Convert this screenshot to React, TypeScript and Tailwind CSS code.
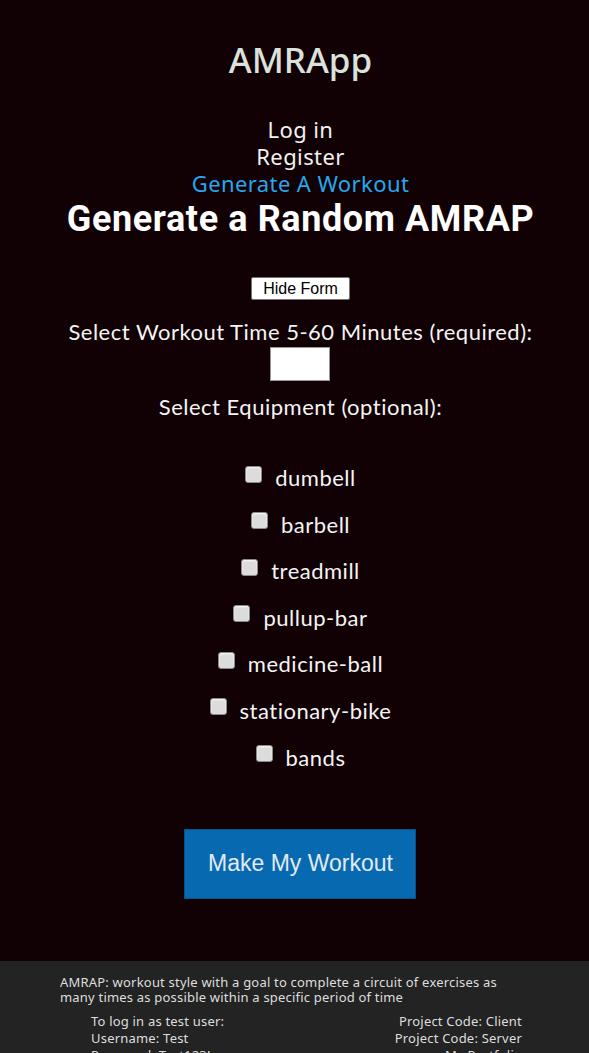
import { useState } from "react";

const EQUIPMENT = [
  "dumbell",
  "barbell",
  "treadmill",
  "pullup-bar",
  "medicine-ball",
  "stationary-bike",
  "bands",
];

const ubuntu = "font-['Noto_Sans','Open_Sans',sans-serif]";
const nunito = "font-['Lato','Noto_Sans',sans-serif]";
const arial = "font-['Liberation_Sans',Arial,sans-serif]";

// Random AMRAP generator: nav, form with equipment checkboxes, info footer.
export default function App() {
  const [checked, setChecked] = useState<Record<string, boolean>>({});

  function toggle(name: string) {
    setChecked((prev) => ({ ...prev, [name]: !prev[name] }));
  }

  return (
    <div className="min-h-[1053px] bg-[#110104] flex flex-col">
      <main className="flex-1 flex flex-col items-center pl-[12px] pb-[62px]">
        <h1 className={`${ubuntu} mt-[38px] text-[35px] leading-[44px] font-medium text-[#dbe2dc]`}>
          AMRApp
        </h1>

        {/* Nav links */}
        <nav
          className={`${ubuntu} mt-[34px] flex flex-col items-center text-[22px] leading-[27px] tracking-[0.4px]`}
        >
          <a className="text-[#f2f2f2]">Log in</a>
          <a className="text-[#f2f2f2]">Register</a>
          <a className="text-[#27a7ee]">Generate A Workout</a>
        </nav>

        <h2 className="font-['Roboto',sans-serif] text-[36px] leading-[44px] font-bold text-white tracking-[0.6px]">
          Generate a Random AMRAP
        </h2>

        <button
          className={`${arial} mt-[36px] h-[23px] px-[11px] bg-white text-black text-[16px] leading-[20px] border border-[#767676] rounded-[2px]`}
        >
          Hide Form
        </button>

        <form
          className={`${nunito} mt-[19px] flex flex-col items-center text-[22px] tracking-[0.5px] text-[#f4f4f4]`}
        >
          <label className="leading-[26px]">Select Workout Time 5-60 Minutes (required):</label>
          <input className="mt-[2px] w-[60px] h-[34px] bg-white border border-[#999]" />
          <label className="mt-[13px] leading-[26px]">Select Equipment (optional):</label>

          {/* Equipment checkboxes */}
          <div className="mt-[45px] flex flex-col items-center gap-[20.6px]">
            {EQUIPMENT.map((name) => (
              <label
                key={name}
                className="flex items-center gap-[13px] leading-[26px] cursor-pointer"
                onClick={() => toggle(name)}
              >
                <span
                  className={`-mt-[8px] w-[17px] h-[17px] rounded-[3px] border border-[#8a8a8a] shadow-[inset_0_1px_2px_rgba(255,255,255,0.9)] ${
                    checked[name] ? "bg-[#3b82f6]" : "bg-[#dcdcdc]"
                  }`}
                />
                <span>{name}</span>
              </label>
            ))}
          </div>

          <button
            type="button"
            className={`${arial} mt-[58px] w-[232px] h-[70px] bg-[#0769b0] border border-[#0a4f86] text-[#e3e9f0] text-[23px] tracking-normal`}
          >
            Make My Workout
          </button>
        </form>
      </main>

      {/* Footer */}
      <footer
        className={`${ubuntu} bg-[#232323] text-[#dedede] text-[13px] leading-[15px] tracking-[0.2px] pt-[14px] pb-[4px]`}
      >
        <p className="pl-[60px] w-[520px]">
          AMRAP: workout style with a goal to complete a circuit of exercises as many times as possible within a
          specific period of time
        </p>
        <div className="mt-[8px] pl-[91px] pr-[67px] flex justify-between leading-[17px]">
          <div className="flex flex-col">
            <span>To log in as test user:</span>
            <span>Username: Test</span>
            <span>Password: Test123!</span>
          </div>
          <div className="flex flex-col items-end">
            <a>Project Code: Client</a>
            <a>Project Code: Server</a>
            <a>My Portfolio</a>
          </div>
        </div>
      </footer>
    </div>
  );
}
